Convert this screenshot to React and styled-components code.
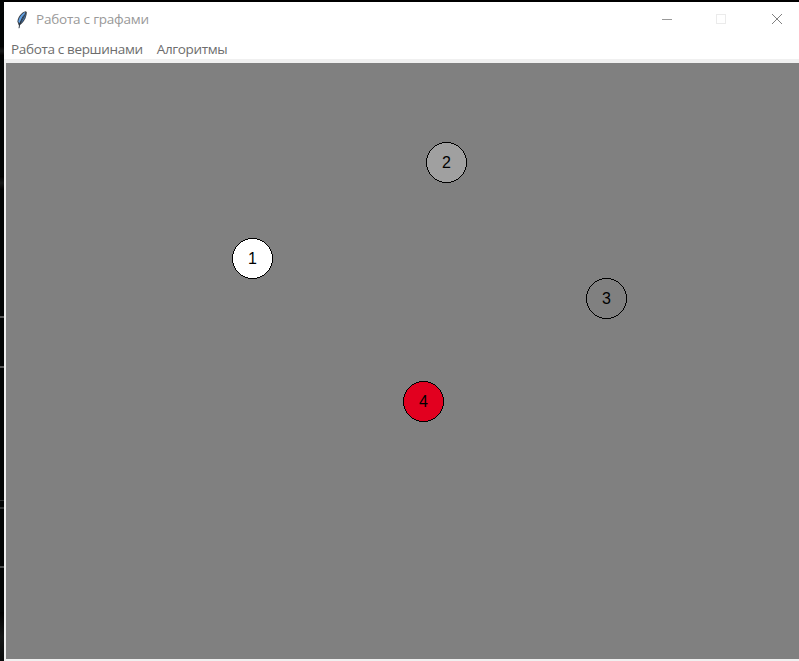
import React from "react";
import styled, { createGlobalStyle } from "styled-components";

const GlobalStyle = createGlobalStyle`
  html, body { margin: 0; background: #000; overflow: hidden; }
  * { box-sizing: border-box; }
`;

const Desktop = styled.div`
  display: grid;
  grid-template-columns: 4px 1fr;
  width: 799px;
  height: 661px;
  background: #000;
`;

const Backdrop = styled.div`
  background:
    linear-gradient(#555, #555) 0 316px / 4px 2px no-repeat,
    linear-gradient(#555, #555) 0 366px / 4px 2px no-repeat,
    linear-gradient(#2c2e2e, #2c2e2e) 0 500px / 4px 1px no-repeat,
    linear-gradient(#303232, #303232) 0 507px / 4px 2px no-repeat,
    linear-gradient(#484a4a, #484a4a) 0 566px / 4px 2px no-repeat,
    linear-gradient(#000, #151717, #000) 0 176px / 4px 14px no-repeat,
    linear-gradient(#000, #181a1a, #000) 0 46px / 4px 10px no-repeat,
    linear-gradient(#000, #151717, #0a0b0b) 0 612px / 4px 49px no-repeat,
    #020404;
`;

const AppWindow = styled.main`
  display: grid;
  grid-template-rows: 35px 22px 1fr;
  min-width: 0;
  margin-top: 2px;
  background: #fff;
  font-family: "Open Sans", "Noto Sans", sans-serif;
  font-size: 13.5px;
`;

const TitleBar = styled.header`
  display: flex;
  align-items: center;
  min-width: 0;
  padding-left: 10px;
  overflow: hidden;
  color: #999;
`;

const Title = styled.span`
  flex: 1;
  margin-left: 6px;
  line-height: 35px;
  letter-spacing: -0.22px;
  white-space: nowrap;
`;

const WindowButton = styled.button`
  display: flex;
  flex: none;
  justify-content: center;
  align-items: center;
  width: ${(p) => p.$width}px;
  height: 35px;
  margin: 0;
  padding: 0 0 1px;
  border: 0;
  background: transparent;
  color: ${(p) => p.$color};

  &:last-child { margin-right: -7px; }
`;

const MenuBar = styled.nav`
  display: flex;
  gap: 14px;
  padding: 1px 0 0 7px;
`;

const MenuItem = styled.span`
  color: #6d6d6d;
  line-height: 23px;
  letter-spacing: -0.34px;
  white-space: nowrap;
`;

const CanvasFrame = styled.section`
  display: grid;
  padding: 4px 0 2px 2px;
  background: #f0f0f0;
`;

const Canvas = styled.div`
  position: relative;
  background: #808080;
`;

const Node = styled.div`
  position: absolute;
  left: ${(p) => p.$x}px;
  top: ${(p) => p.$y}px;
  display: grid;
  place-items: center;
  width: 41px;
  height: 41px;
  color: #000;
  font: 16px/41px "Liberation Sans", Arial, sans-serif;

  > * { grid-area: 1 / 1; }
`;

const nodes = [
  { id: 1, x: 226, y: 175, fill: "#ffffff" },
  { id: 2, x: 420, y: 79, fill: "#a0a0a0" },
  { id: 3, x: 580, y: 215, fill: "#808080" },
  { id: 4, x: 397, y: 318, fill: "#e2001f" },
];

const FeatherIcon = () => (
  <svg width="16" height="18" viewBox="0 0 16 18" aria-hidden="true">
    <path d="M11.6 .2C7.6 1.2 3.8 5.6 3.4 10.6L4.8 14.6C9 12.6 12.8 7 12.8 1Z" fill="#3a4048" />
    <path d="M11.4 1C8 2.2 4.9 6.6 4.4 10.4L5.2 12.2C7.7 9.4 9.8 5.4 11.4 1Z" fill="#62a2e6" />
    <path d="M11.9 2.4C11.6 6.6 9.3 10.4 6.2 12.5C8.6 9.4 10.2 6 11.9 2.4Z" fill="#3f78b8" />
    <path d="M9.8 4.4C7.8 7.5 5.6 12 5 17.2" fill="none" stroke="#222c38" strokeWidth="0.9" />
  </svg>
);

const Disc = ({ fill }) => (
  <svg width="41" height="41" viewBox="0 0 41 41" shapeRendering="crispEdges" aria-hidden="true">
    <circle cx="20.5" cy="20.5" r="20" fill={fill} stroke="#000" />
  </svg>
);

export default function App() {
  return (
    <>
      <GlobalStyle />
      <Desktop>
        <Backdrop />
        <AppWindow>
          <TitleBar>
            <FeatherIcon />
            <Title>Работа с графами</Title>
            <WindowButton $width={54} $color="#999" aria-label="Свернуть">
              <svg width="10" height="10" shapeRendering="crispEdges">
                <path d="M0 5.5H10" stroke="currentColor" />
              </svg>
            </WindowButton>
            <WindowButton $width={54} $color="#ebebeb" aria-label="Развернуть" disabled>
              <svg width="10" height="10" shapeRendering="crispEdges">
                <path d="M.5 .5H9.5V9.5H.5Z" fill="none" stroke="currentColor" />
              </svg>
            </WindowButton>
            <WindowButton $width={58} $color="#808080" aria-label="Закрыть">
              <svg width="10" height="10">
                <path d="M0 0L10 10M10 0L0 10" stroke="currentColor" />
              </svg>
            </WindowButton>
          </TitleBar>
          <MenuBar>
            <MenuItem>Работа с вершинами</MenuItem>
            <MenuItem>Алгоритмы</MenuItem>
          </MenuBar>
          <CanvasFrame>
            <Canvas>
              {nodes.map((n) => (
                <Node key={n.id} $x={n.x} $y={n.y}>
                  <Disc fill={n.fill} />
                  <span>{n.id}</span>
                </Node>
              ))}
            </Canvas>
          </CanvasFrame>
        </AppWindow>
      </Desktop>
    </>
  );
}
